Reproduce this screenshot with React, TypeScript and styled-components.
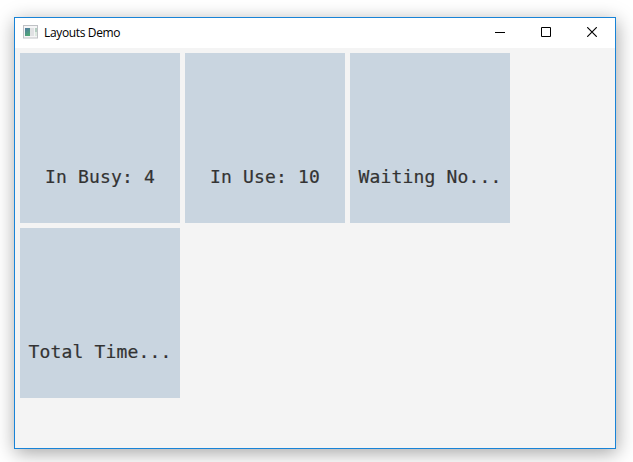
import React from 'react';
import styled, { createGlobalStyle } from 'styled-components';

const GlobalStyle = createGlobalStyle`
  * { box-sizing: border-box; }
  body { margin: 0; background: #fff; overflow: hidden; }
`;

const Desktop = styled.div`
  width: 633px;
  height: 462px;
  padding: 17px 17px 13px 14px;
  overflow: hidden;
`;

const Window = styled.main`
  height: 432px;
  display: flex;
  flex-direction: column;
  border: 1px solid #1883d7;
  background: #f4f4f4;
  box-shadow: 1px 4px 18px rgba(0, 0, 0, 0.36);
`;

const TitleBar = styled.header`
  height: 30px;
  display: flex;
  align-items: center;
  padding-left: 8px;
  background: #fff;
`;

const Title = styled.h1`
  flex: 1;
  margin: 0 0 0 6px;
  font: 400 12px/16px 'Open Sans', sans-serif;
  letter-spacing: -0.35px;
  color: #000;
`;

const CaptionButton = styled.button`
  width: 46px;
  height: 30px;
  display: grid;
  place-items: center;
  padding: 0 0 2px;
  border: 0;
  background: none;
`;

const FlowPane = styled.section`
  display: flex;
  flex-wrap: wrap;
  align-content: flex-start;
  gap: 5px;
  padding: 5px 100px 5px 5px;
`;

const Tile = styled.div`
  width: 160px;
  height: 170px;
  padding-top: 112px;
  background: #c9d5e0;
  color: #333;
  font: 400 18px/24px 'DejaVu Sans Mono', monospace;
  letter-spacing: 0.16px;
  -webkit-text-stroke: 0.2px #333;
  text-align: center;
  white-space: pre;
`;

const IconImage = styled.svg`
  display: block;
  margin-bottom: 2px;
`;

const AppIcon = () => (
  <IconImage width="15" height="14" viewBox="0 0 15 14">
    <defs>
      <linearGradient id="screen" x1="0" y1="0" x2="0.4" y2="1">
        <stop offset="0" stopColor="#4f77a0" />
        <stop offset="1" stopColor="#4fa578" />
      </linearGradient>
    </defs>
    <rect x="0.5" y="0.5" width="14" height="12.5" fill="#f5f5f6" stroke="#bfc1c5" />
    <rect x="2" y="3" width="5" height="8" fill="url(#screen)" />
    <rect x="7" y="3" width="4" height="8" fill="#e0e1e3" />
    <rect x="12" y="3" width="2" height="4" fill="#b5cec2" />
    <rect x="12" y="7" width="2" height="4" fill="#dce9df" />
  </IconImage>
);

const glyphs = [
  { label: 'Minimize', path: 'M0 5.5H10' },
  { label: 'Maximize', path: 'M0.5 0.5H9.5V9.5H0.5Z' },
  { label: 'Close', path: 'M0.2 0.2L9.8 9.8M9.8 0.2L0.2 9.8' },
];

const tiles = ['In Busy: 4', 'In Use: 10', 'Waiting No...', 'Total Time...'];

export default function App() {
  return (
    <>
      <GlobalStyle />
      <Desktop>
        <Window>
          <TitleBar>
            <AppIcon />
            <Title>Layouts Demo</Title>
            {glyphs.map((g) => (
              <CaptionButton key={g.label} aria-label={g.label}>
                <svg width="10" height="10" viewBox="0 0 10 10" fill="none" stroke="#000" strokeWidth={g.label === 'Close' ? 1.15 : 1}>
                  <path d={g.path} />
                </svg>
              </CaptionButton>
            ))}
          </TitleBar>
          <FlowPane>
            {tiles.map((t) => (
              <Tile key={t}>{t}</Tile>
            ))}
          </FlowPane>
        </Window>
      </Desktop>
    </>
  );
}
